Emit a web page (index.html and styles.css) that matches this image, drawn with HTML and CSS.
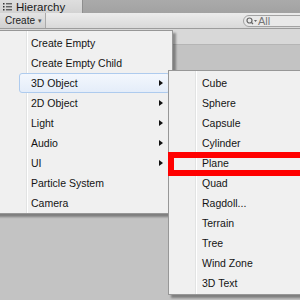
FILE: index.html
```html
<!DOCTYPE html>
<html>
<head>
<meta charset="utf-8">
<link rel="stylesheet" href="styles.css">
</head>
<body>
<div class="window">
  <div class="tabbar">
    <div class="tab">
      <svg class="tab-icon" width="9" height="8" viewBox="0 0 9 8"><g fill="#333"><rect x="0" y="0" width="1.5" height="1.5"/><rect x="0" y="3" width="1.5" height="1.5"/><rect x="0" y="6" width="1.5" height="1.5"/><rect x="3" y="0.3" width="6" height="1"/><rect x="3" y="3.3" width="6" height="1"/><rect x="3" y="6.3" width="6" height="1"/></g></svg>
      <span>Hierarchy</span>
    </div>
  </div>
  <div class="toolbar">
    <div class="create">Create <span class="caret">▾</span></div>
    <div class="search">
      <svg class="search-icon" width="12" height="8" viewBox="0 0 12 8"><circle cx="3.5" cy="3.5" r="2.5" fill="none" stroke="#666" stroke-width="1.2"/><line x1="5.3" y1="5.3" x2="7" y2="7" stroke="#666" stroke-width="1.3"/><path d="M8 3h3l-1.5 2z" fill="#666"/></svg>
      <span>All</span>
    </div>
  </div>
  <div class="content">
    <div class="scene-row"></div>
  </div>

  <div class="menu main-menu">
    <div class="item">Create Empty</div>
    <div class="item">Create Empty Child</div>
    <div class="item sub active">3D Object</div>
    <div class="item sub">2D Object</div>
    <div class="item sub">Light</div>
    <div class="item sub">Audio</div>
    <div class="item sub">UI</div>
    <div class="item">Particle System</div>
    <div class="item">Camera</div>
  </div>

  <div class="menu sub-menu">
    <div class="item">Cube</div>
    <div class="item">Sphere</div>
    <div class="item">Capsule</div>
    <div class="item">Cylinder</div>
    <div class="item marked">Plane<span class="mark"></span></div>
    <div class="item">Quad</div>
    <div class="item">Ragdoll...</div>
    <div class="item">Terrain</div>
    <div class="item">Tree</div>
    <div class="item">Wind Zone</div>
    <div class="item">3D Text</div>
  </div>
</div>
</body>
</html>
```

FILE: styles.css
```css
html, body {
  margin: 0;
  padding: 0;
}
body {
  font-family: "Liberation Sans", Arial, sans-serif;
  color: #111;
}
.window {
  position: relative;
  width: 300px;
  height: 300px;
  overflow: hidden;
  background: #c3c3c3;
  display: flex;
  flex-direction: column;
}
.tabbar {
  height: 13px;
  background: linear-gradient(#aaaaaa, #a2a2a2);
  display: flex;
  align-items: flex-end;
}
.tab {
  width: 83px;
  height: 13px;
  box-sizing: border-box;
  background: linear-gradient(#dedede, #d2d2d2);
  border-right: 1px solid #8e8e8e;
  display: flex;
  align-items: center;
  gap: 4px;
  padding-left: 3px;
  font-size: 11.5px;
  color: #1a1a1a;
}
.tab-icon { flex: none; }
.toolbar {
  height: 16px;
  box-sizing: border-box;
  background: linear-gradient(#ececec, #d9d9d9);
  border-bottom: 1px solid #9c9c9c;
  display: flex;
  align-items: center;
}
.create {
  width: 46px;
  height: 15px;
  box-sizing: border-box;
  border-right: 1px solid #aaa;
  background: linear-gradient(#e4e4e4, #d0d0d0);
  font-size: 10px;
  padding-left: 5px;
  display: flex;
  align-items: center;
  gap: 3px;
  color: #222;
}
.caret { font-size: 7px; color: #555; }
.search {
  margin-left: auto;
  margin-right: -20px;
  width: 77px;
  height: 12px;
  box-sizing: border-box;
  border: 1px solid #a3a3a3;
  border-radius: 6px 0 0 6px;
  background: #e9e9e9;
  display: flex;
  align-items: center;
  gap: 0;
  padding-left: 2px;
  font-size: 11px;
  color: #777;
}
.content { flex: 1; }
.scene-row {
  height: 15px;
  background: #d8d8d8;
  border-bottom: 1px solid #b5b5b5;
}

.menu {
  position: absolute;
  box-sizing: border-box;
  background-color: #f0f0f0;
  border: 1px solid #979797;
  padding-top: 2px;
  font-size: 10.5px;
  color: #141414;
  box-shadow: 3px 3px 2px rgba(0,0,0,0.35);
}
.main-menu {
  left: -5px;
  top: 30px;
  width: 178px;
  height: 184px;
  background-image: linear-gradient(90deg, transparent 30px, #e2e3e3 30px, #e2e3e3 31px, #ffffff 31px, #ffffff 32px, transparent 32px);
}
.sub-menu {
  left: 168px;
  top: 70px;
  width: 150px;
  height: 225px;
  background-image: linear-gradient(90deg, transparent 26px, #e2e3e3 26px, #e2e3e3 27px, #ffffff 27px, #ffffff 28px, transparent 28px);
}
.item {
  position: relative;
  height: 20px;
  box-sizing: border-box;
  border: 1px solid transparent;
  border-radius: 3px;
  display: flex;
  align-items: center;
}
.main-menu .item {
  margin: 0 2px 0 23px;
  padding-left: 11px;
  padding-right: 6px;
}
.sub-menu .item {
  margin: 0 2px 0 2px;
  padding-left: 30px;
}
.item.sub::after {
  content: "";
  margin-left: auto;
  border-left: 4px solid #111;
  border-top: 3.5px solid transparent;
  border-bottom: 3.5px solid transparent;
}
.item.active {
  border-color: #aecbee;
  background: linear-gradient(#f3f7fd, #e4edf9);
}
.mark {
  position: absolute;
  left: -4px;
  top: -2px;
  width: 150px;
  height: 24px;
  box-sizing: border-box;
  border: 6px solid #ff0000;
}
```
